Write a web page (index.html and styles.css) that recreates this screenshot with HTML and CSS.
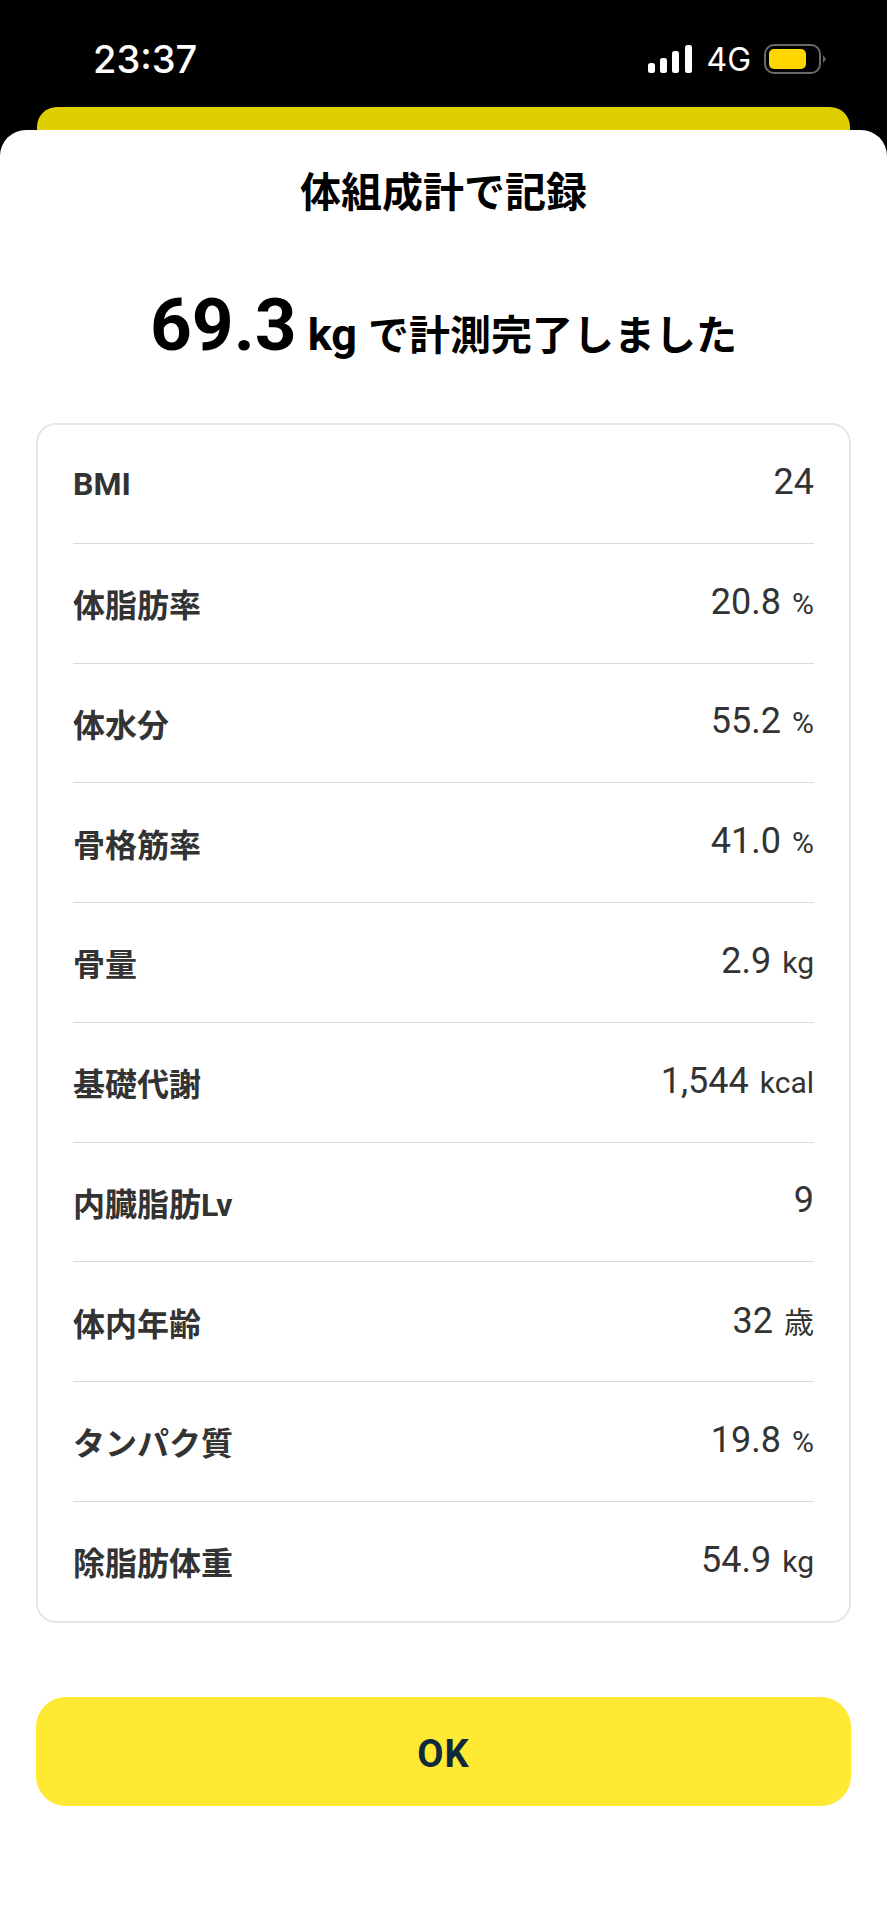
FILE: index.html
```html
<!DOCTYPE html>
<html lang="ja">
<head>
    <meta charset="UTF-8">
    <meta name="viewport" content="width=device-width, initial-scale=1.0">
    <title>体組成計で記録</title>
    <link rel="stylesheet" href="styles.css">
</head>
<body>
    <div class="status-bar">
        <div class="status-time">23:37</div>
        <div class="status-icons">
            <svg class="signal-icon" width="44" height="28" viewBox="0 0 44 28">
                <rect x="0" y="18" width="7" height="10" rx="2.5" fill="#fff"/>
                <rect x="12" y="13" width="7" height="15" rx="2.5" fill="#fff"/>
                <rect x="24" y="6" width="7" height="22" rx="2.5" fill="#fff"/>
                <rect x="37" y="0" width="7" height="28" rx="2.5" fill="#fff"/>
            </svg>
            <span class="status-network">4G</span>
            <svg class="battery-icon" width="63" height="30" viewBox="0 0 63 30">
                <rect x="1" y="1" width="55" height="28" rx="9" fill="none" stroke="#6a6a6a" stroke-width="2"/>
                <rect x="5" y="5" width="37" height="20" rx="5" fill="#ffd600"/>
                <path d="M59 11 L62 15 L59 19 Z" fill="#6a6a6a"/>
            </svg>
        </div>
    </div>

    <div class="peek-sheet"></div>

    <div class="sheet">
        <h1 class="sheet-title">体組成計で記録</h1>

        <div class="headline">
            <span class="headline-value">69.3</span>
            <span class="headline-unit">kg</span>
            <span class="headline-text">で計測完了しました</span>
        </div>

        <div class="result-card">
            <div class="result-row">
                <div class="result-label">BMI</div>
                <div class="result-value">24</div>
            </div>
            <div class="result-row">
                <div class="result-label">体脂肪率</div>
                <div class="result-value">20.8<span class="result-unit">%</span></div>
            </div>
            <div class="result-row">
                <div class="result-label">体水分</div>
                <div class="result-value">55.2<span class="result-unit">%</span></div>
            </div>
            <div class="result-row">
                <div class="result-label">骨格筋率</div>
                <div class="result-value">41.0<span class="result-unit">%</span></div>
            </div>
            <div class="result-row">
                <div class="result-label">骨量</div>
                <div class="result-value">2.9<span class="result-unit">kg</span></div>
            </div>
            <div class="result-row">
                <div class="result-label">基礎代謝</div>
                <div class="result-value">1,544<span class="result-unit">kcal</span></div>
            </div>
            <div class="result-row">
                <div class="result-label">内臓脂肪Lv</div>
                <div class="result-value">9</div>
            </div>
            <div class="result-row">
                <div class="result-label">体内年齢</div>
                <div class="result-value">32<span class="result-unit">歳</span></div>
            </div>
            <div class="result-row">
                <div class="result-label">タンパク質</div>
                <div class="result-value">19.8<span class="result-unit">%</span></div>
            </div>
            <div class="result-row">
                <div class="result-label">除脂肪体重</div>
                <div class="result-value">54.9<span class="result-unit">kg</span></div>
            </div>
        </div>

        <button class="ok-btn">OK</button>
    </div>
</body>
</html>
```

FILE: styles.css
```css
* {
    margin: 0;
    padding: 0;
    box-sizing: border-box;
}

body {
    font-family: Roboto, 'Noto Sans CJK JP', sans-serif;
    background: #000;
    height: 1920px;
    display: flex;
    flex-direction: column;
    overflow: hidden;
    color: #333;
}

.status-bar {
    height: 107px;
    padding: 43px 60px 0 93px;
    display: flex;
    justify-content: space-between;
    align-items: flex-start;
    color: #fff;
}

.status-time {
    font-family: Inter, sans-serif;
    font-size: 38px;
    font-weight: 500;
    line-height: 32px;
}

.status-icons {
    display: flex;
    align-items: center;
    height: 30px;
    margin-top: 1px;
}

.signal-icon {
    margin-right: 14px;
}

.status-network {
    font-family: Inter, sans-serif;
    font-size: 32px;
    margin-right: 13px;
}

.peek-sheet {
    height: 23px;
    margin: 0 37px;
    background: #e0cf00;
    border-radius: 20px 20px 0 0;
}

.sheet {
    flex: 1;
    background: #fff;
    border-radius: 26px 26px 0 0;
    padding: 0 36px;
}

.sheet-title {
    font-size: 41px;
    font-weight: 700;
    line-height: 58px;
    margin-top: 34px;
    color: #000;
    text-align: center;
}

.headline {
    display: flex;
    justify-content: center;
    align-items: baseline;
    margin-top: 61px;
    color: #000;
    font-weight: 700;
    line-height: 84px;
}

.headline-value {
    font-size: 73px;
}

.headline-unit {
    font-size: 45px;
    margin-left: 11px;
}

.headline-text {
    font-size: 41px;
    margin-left: 11px;
}

.result-card {
    margin-top: 45px;
    border: 2px solid #e6e6e6;
    border-radius: 20px;
    padding: 0 35px;
}

.result-row {
    height: 119.75px;
    display: flex;
    justify-content: space-between;
    align-items: center;
    border-bottom: 1px solid #d9d9d9;
}

.result-row:first-child {
    height: 118.75px;
}

.result-row:last-child {
    height: 119px;
    border-bottom: none;
}

.result-label {
    font-size: 32px;
    font-weight: 700;
}

.result-value {
    font-size: 36px;
    margin-top: -3px;
}

.result-unit {
    font-size: 30px;
    margin-left: 11px;
}

.ok-btn {
    display: block;
    width: 100%;
    height: 109px;
    margin-top: 74px;
    padding-top: 5px;
    background: #ffe933;
    border: none;
    border-radius: 30px;
    font-family: Roboto, sans-serif;
    font-size: 38px;
    font-weight: 700;
    letter-spacing: 1px;
    color: #0f2a3a;
}
```
